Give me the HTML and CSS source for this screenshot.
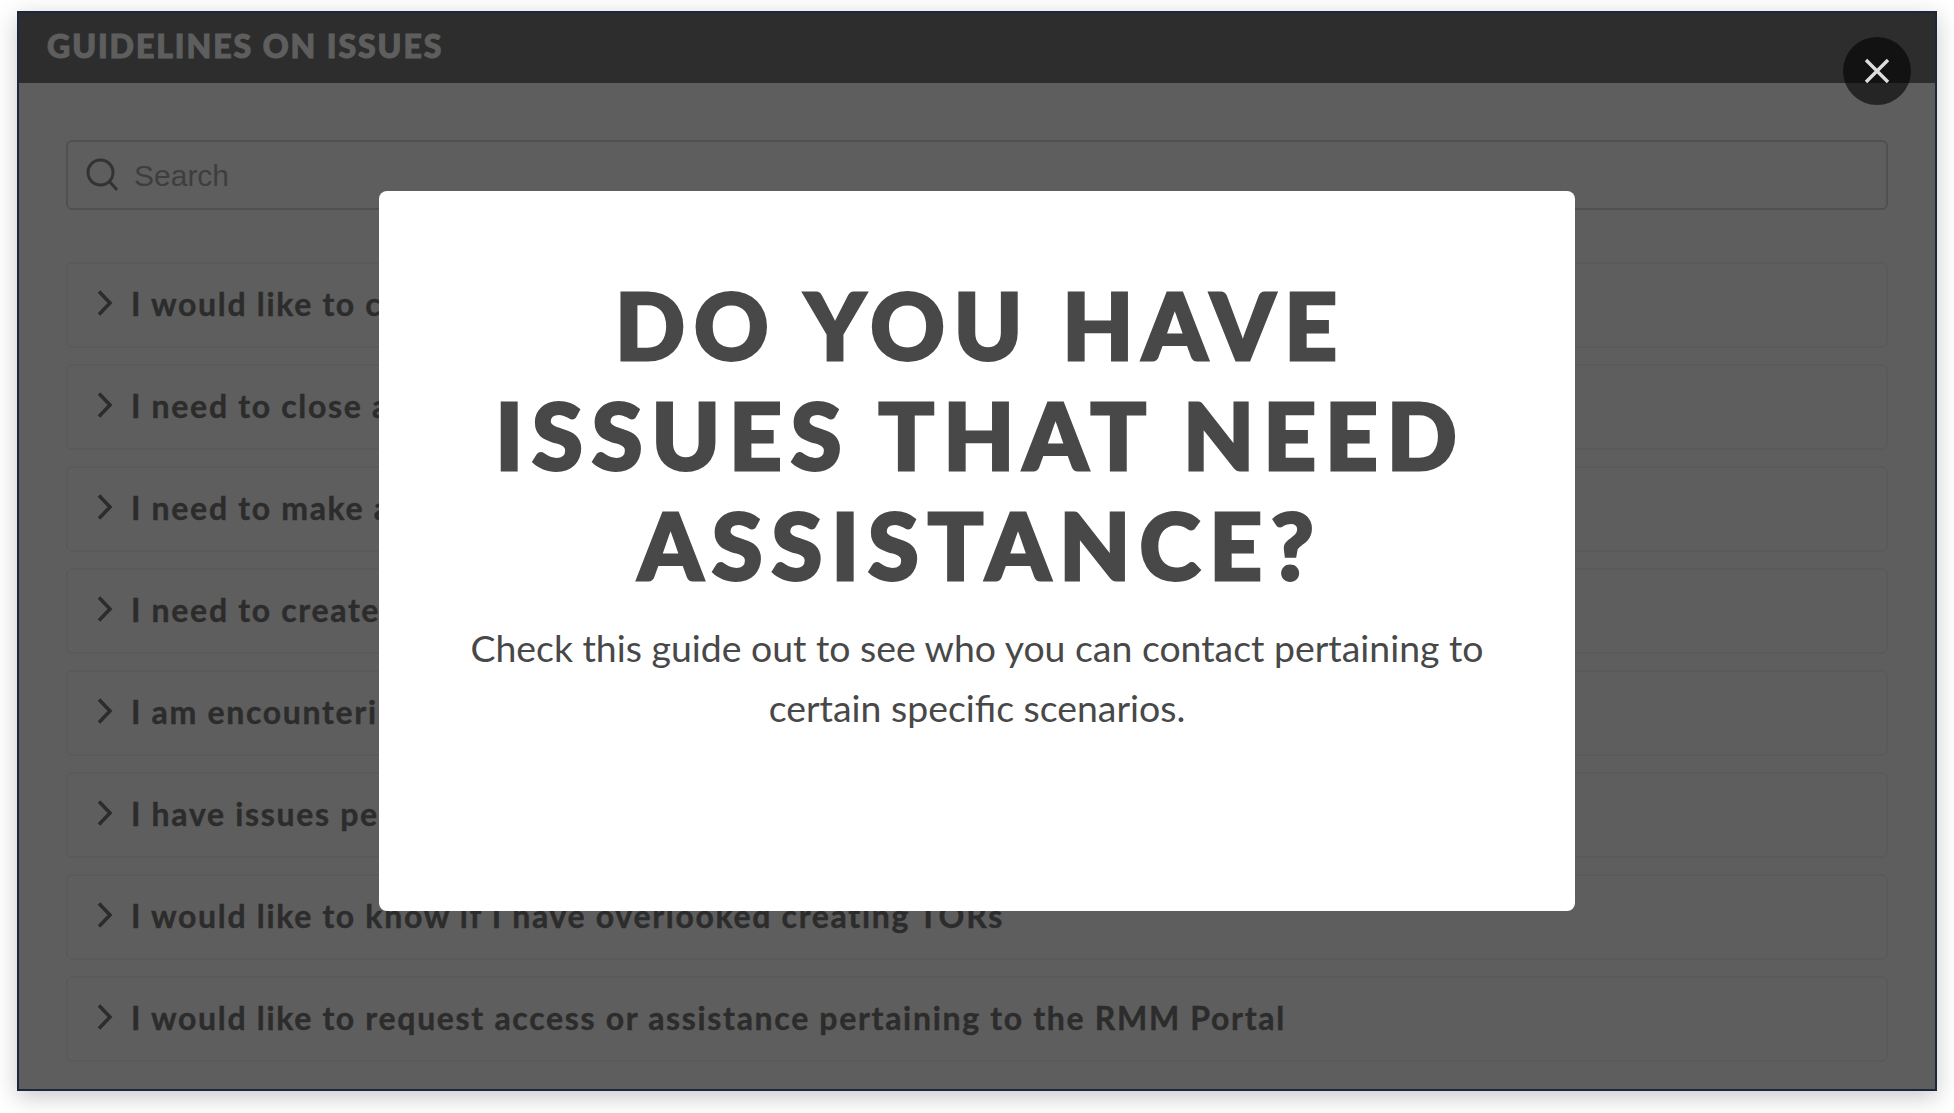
FILE: index.html
```html
<!DOCTYPE html>
<html lang="en">
<head>
    <meta charset="UTF-8">
    <meta name="viewport" content="width=device-width, initial-scale=1.0">
    <title>Guidelines on Issues</title>
    <link rel="stylesheet" href="styles.css">
</head>
<body>
    <div class="window">
        <header class="window-header">
            <h1>GUIDELINES ON ISSUES</h1>
        </header>
        <main class="window-body">
            <div class="search">
                <svg class="search-icon" width="32" height="34" viewBox="0 0 32 34" fill="none" stroke="currentColor" stroke-width="3">
                    <circle cx="14.5" cy="14.5" r="12.5"/>
                    <path d="M23.5 23.5L31 32"/>
                </svg>
                <span class="search-text">Search</span>
            </div>
            <div class="issue"><svg class="chevron" width="16" height="28" viewBox="0 0 16 28" fill="none" stroke="currentColor" stroke-width="3.6"><path d="M2 2.5L13 14L2 25.5"/></svg><span>I would like to change my account details</span></div>
            <div class="issue"><svg class="chevron" width="16" height="28" viewBox="0 0 16 28" fill="none" stroke="currentColor" stroke-width="3.6"><path d="M2 2.5L13 14L2 25.5"/></svg><span>I need to close a project</span></div>
            <div class="issue"><svg class="chevron" width="16" height="28" viewBox="0 0 16 28" fill="none" stroke="currentColor" stroke-width="3.6"><path d="M2 2.5L13 14L2 25.5"/></svg><span>I need to make a payment</span></div>
            <div class="issue"><svg class="chevron" width="16" height="28" viewBox="0 0 16 28" fill="none" stroke="currentColor" stroke-width="3.6"><path d="M2 2.5L13 14L2 25.5"/></svg><span>I need to create a request</span></div>
            <div class="issue"><svg class="chevron" width="16" height="28" viewBox="0 0 16 28" fill="none" stroke="currentColor" stroke-width="3.6"><path d="M2 2.5L13 14L2 25.5"/></svg><span>I am encountering an error</span></div>
            <div class="issue"><svg class="chevron" width="16" height="28" viewBox="0 0 16 28" fill="none" stroke="currentColor" stroke-width="3.6"><path d="M2 2.5L13 14L2 25.5"/></svg><span>I have issues pertaining to my access</span></div>
            <div class="issue"><svg class="chevron" width="16" height="28" viewBox="0 0 16 28" fill="none" stroke="currentColor" stroke-width="3.6"><path d="M2 2.5L13 14L2 25.5"/></svg><span>I would like to know if I have overlooked creating TORs</span></div>
            <div class="issue"><svg class="chevron" width="16" height="28" viewBox="0 0 16 28" fill="none" stroke="currentColor" stroke-width="3.6"><path d="M2 2.5L13 14L2 25.5"/></svg><span>I would like to request access or assistance pertaining to the RMM Portal</span></div>
        </main>

        <div class="overlay">
            <div class="modal">
                <h2>DO YOU HAVE<br>ISSUES THAT NEED<br>ASSISTANCE?</h2>
                <p>Check this guide out to see who you can contact pertaining to certain specific scenarios.</p>
            </div>
            <button class="close-btn" type="button" aria-label="Close">
                <svg width="26" height="26" viewBox="0 0 26 26" fill="none" stroke="currentColor" stroke-width="3.4"><path d="M2 2L24 24M24 2L2 24"/></svg>
            </button>
        </div>
    </div>
</body>
</html>
```

FILE: styles.css
```css
* {
    box-sizing: border-box;
}
html, body {
    height: 100%;
}
body {
    margin: 0;
    padding: 11px 17px 22px;
    background-color: #fff;
    font-family: Lato, "Open Sans", sans-serif;
}
.window {
    position: relative;
    height: 100%;
    overflow: hidden;
    background-color: #fff;
    border: 2px solid #1b2740;
    box-shadow: 0 6px 22px rgba(0, 0, 0, 0.22);
}
.window-header {
    display: flex;
    align-items: center;
    height: 70px;
    padding: 0 28px 6px;
    background-color: #7a7a7a;
}
.window-header h1 {
    margin: 0;
    font-size: 32px;
    font-weight: 900;
    letter-spacing: 1.95px;
    color: #fff;
    -webkit-text-stroke: 1px #fff;
}
.window-body {
    padding: 57px 47px 0;
}
.search {
    display: flex;
    align-items: center;
    gap: 16px;
    height: 70px;
    margin-bottom: 52px;
    padding: 0 18px;
    border: 2px solid #d8d8d8;
    border-radius: 6px;
    color: #a8a8a8;
}
.search-icon {
    color: #8a8a8a;
}
.search-text {
    font-family: "Liberation Sans", Arial, sans-serif;
    font-size: 30px;
    padding-top: 2px;
}
.issue {
    display: flex;
    align-items: center;
    gap: 18px;
    height: 86px;
    margin-bottom: 16px;
    padding: 0 29px 4px;
    border: 2px solid #f4f4f4;
    border-radius: 6px;
    font-size: 32px;
    font-weight: 700;
    letter-spacing: 1.68px;
    color: #777;
    -webkit-text-stroke: 0.4px #777;
}
.chevron {
    flex: none;
}
.overlay {
    position: absolute;
    inset: 0;
    display: flex;
    align-items: center;
    justify-content: center;
    background-color: rgba(0, 0, 0, 0.63);
}
.modal {
    width: 1196px;
    height: 720px;
    padding: 79px 80px 0;
    border-radius: 8px;
    background-color: #fff;
    text-align: center;
    color: #484848;
}
.modal h2 {
    margin: 0 0 18px;
    padding-left: 7px;
    font-size: 92px;
    font-weight: 900;
    line-height: 110px;
    letter-spacing: 9px;
    -webkit-text-stroke: 3px #484848;
}
.modal p {
    margin: 0;
    font-size: 37.4px;
    line-height: 60px;
}
.close-btn {
    position: absolute;
    top: 24px;
    right: 24px;
    display: flex;
    align-items: center;
    justify-content: center;
    width: 68px;
    height: 68px;
    padding: 0;
    border: 0;
    border-radius: 50%;
    background-color: rgba(0, 0, 0, 0.6);
    color: #ddd;
}
```
